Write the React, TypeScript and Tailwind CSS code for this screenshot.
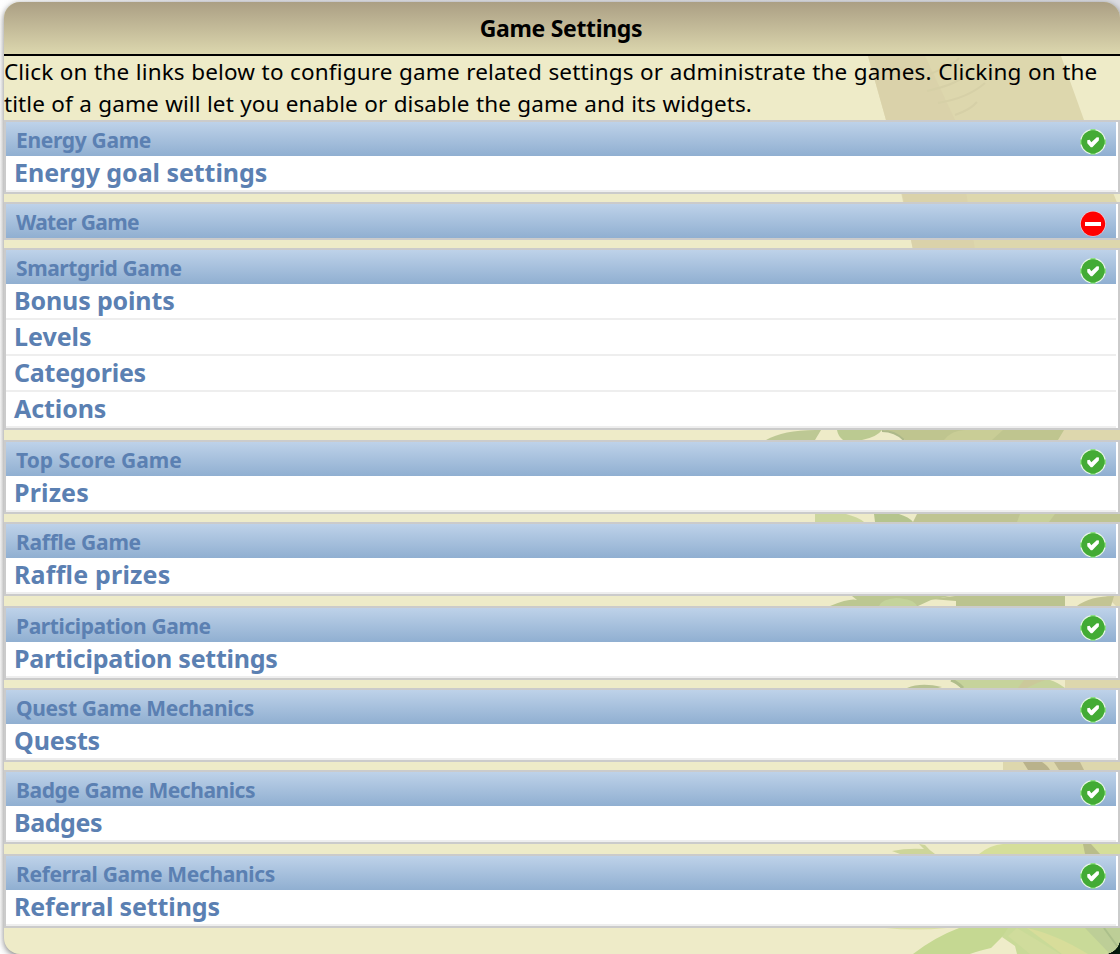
type Link = { label: string; tracking: string };

type Game = {
  title: string;
  tracking: string;
  enabled: boolean;
  links: Link[];
  gap: string;
  icon: string;
};

const games: Game[] = [
  {
    title: "Energy Game",
    tracking: "tracking-[-0.33px]",
    enabled: true,
    links: [{ label: "Energy goal settings", tracking: "tracking-[-0.05px]" }],
    gap: "",
    icon: "mt-[7px]",
  },
  { title: "Water Game", tracking: "tracking-[-0.7px]", enabled: false, links: [], gap: "mt-2", icon: "mt-[7px]" },
  {
    title: "Smartgrid Game",
    tracking: "tracking-[-0.43px]",
    enabled: true,
    links: [
      { label: "Bonus points", tracking: "tracking-[-0.15px]" },
      { label: "Levels", tracking: "tracking-[0px]" },
      { label: "Categories", tracking: "tracking-[-0.25px]" },
      { label: "Actions", tracking: "tracking-[-0.1px]" },
    ],
    gap: "mt-2",
    icon: "mt-2",
  },
  {
    title: "Top Score Game",
    tracking: "tracking-[0px]",
    enabled: true,
    links: [{ label: "Prizes", tracking: "tracking-[0.15px]" }],
    gap: "mt-2.5",
    icon: "mt-[7px]",
  },
  {
    title: "Raffle Game",
    tracking: "tracking-[-0.25px]",
    enabled: true,
    links: [{ label: "Raffle prizes", tracking: "tracking-[0.2px]" }],
    gap: "mt-2",
    icon: "mt-2",
  },
  {
    title: "Participation Game",
    tracking: "tracking-[-0.4px]",
    enabled: true,
    links: [{ label: "Participation settings", tracking: "tracking-[-0.25px]" }],
    gap: "mt-2.5",
    icon: "mt-[7px]",
  },
  {
    title: "Quest Game Mechanics",
    tracking: "tracking-[-0.35px]",
    enabled: true,
    links: [{ label: "Quests", tracking: "tracking-[-0.15px]" }],
    gap: "mt-2",
    icon: "mt-[7px]",
  },
  {
    title: "Badge Game Mechanics",
    tracking: "tracking-[-0.45px]",
    enabled: true,
    links: [{ label: "Badges", tracking: "tracking-[-0.45px]" }],
    gap: "mt-2",
    icon: "mt-2",
  },
  {
    title: "Referral Game Mechanics",
    tracking: "tracking-[-0.33px]",
    enabled: true,
    links: [{ label: "Referral settings", tracking: "tracking-[-0.12px]" }],
    gap: "mt-2.5",
    icon: "mt-[7px]",
  },
];

function StatusIcon({ enabled, className }: { enabled: boolean; className: string }) {
  return (
    <svg viewBox="0 0 26 26" className={`mr-2.5 h-[26px] w-[26px] shrink-0 ${className}`}>
      {enabled ? (
        <>
          <circle cx="13" cy="12.8" r="12.8" fill="#e9f8e6" />
          <path d="M10.5 1 H15.5 M10.5 24.6 H15.5 M1.1 10.5 V15.5 M24.9 10.5 V15.5" stroke="#6fd864" strokeWidth="1.6" />
          <circle cx="13" cy="12.8" r="11.6" fill="#43ab35" />
          <path d="M7.2 11.2 L9.6 10.8 L11.3 13.2 L16.8 8.2 L19 8.4 L18.8 11.6 L12.3 18.2 L10.8 18.2 L7.3 14.3 Z" fill="#fff" />
        </>
      ) : (
        <>
          <circle cx="13" cy="12.8" r="12.8" fill="#f4d3dc" />
          <circle cx="13" cy="12.8" r="12.2" fill="#f00" />
          <rect x="5" y="11" width="16" height="4" fill="#fff" />
        </>
      )}
    </svg>
  );
}

function PlantBackdrop() {
  return (
    <svg viewBox="0 0 1116 952" className="absolute inset-0 h-full w-full" preserveAspectRatio="none">
      <g transform="translate(-4 -2)">
        <path d="M864 0 L868 56 L886 120 L903 198 L913 250 L940 430 L1120 610 V210 L1084 120 L1061 56 L1047 0 Z" fill="#ddd7ad" />
        <path d="M868 56 L886 120 L913 250 L975 250 L955 120 L925 56 Z" fill="#d8d0a8" opacity=".7" />
        <path d="M930 74 q25 -10 29 -16 M927 91 q32 -7 42 -19 M938 103 q30 -5 47 -20 M955 115 q15 -5 22 -13" stroke="#d6d0a7" fill="none" strokeWidth="2" />
        <path d="M940 428 H1120 V606 H1065 V762 H1003 V772 H1120 V940 V428 Z" fill="#ddd7ad" />

        <path d="M766 440 Q785 429 821 430 L815 440 Z" fill="#bdc894" />
        <path d="M837 430 H882 Q877 437 862 440 H843 Q838 436 837 430 Z" fill="#bbca91" />
        <path d="M883 430 H1064 L1058 440 H905 Q895 433 883 430 Z" fill="#bfc58f" />
        <path d="M944 440 Q952 430 965 430 H1003 L992 440 Z" fill="#c9cd96" />
        <path d="M882 431 Q895 431 904 440" stroke="#aeb98a" fill="none" strokeWidth="2" />

        <path d="M815 514 H846 Q858 517 864 522 H815 Z" fill="#ccd69e" />
        <path d="M874 514 H899 Q909 517 913 522 H875 Z" fill="#b5c48d" />
        <path d="M917 514 H1120 V522 H913 Z" fill="#bfc492" />
        <path d="M1020 514 H1055 L1049 522 H1017 Z" fill="#c8d09a" />

        <path d="M830 606 Q850 598 857 600 L852 596 H950 L931 600 L918 606 Z" fill="#bcc791" />
        <path d="M879 606 Q882 599 896 598 Q914 599 917 606 Z" fill="#c4d39b" />
        <path d="M955 596 H1065 V606 H956 V601 L931 599 Z" fill="#bbc38f" />
        <path d="M1077 606 Q1090 596 1114 596 L1111 606 Z" fill="#c3c493" />

        <path d="M907 688 Q921 682 942 687 L938 688 Z" fill="#b8c292" />
        <path d="M951 680 L961 688 H1065 Q1057 682 1050 680 Z" fill="#c6d39b" />
        <path d="M951 680 Q957 682 963 688" stroke="#b0bd8b" fill="none" strokeWidth="3" />
        <path d="M1024 680 H1045 L1037 683 L1027 688 H1018 Z" fill="#cbc99a" />

        <path d="M1023 762 H1042 Q1048 766 1050 770 H1028 Z" fill="#b9b28b" />
        <path d="M1054 762 H1080 L1084 770 H1059 Z" fill="#bfb891" />

        <path d="M892 851 Q907 848 924 849 L919 844 L925 845 Q930 851 935 854 H900 Z" fill="#cdd59a" />
        <path d="M979 854 Q990 845 1003 844 H1120 V854 Z" fill="#d5de9a" />
        <path d="M1083 844 H1091 L1100 854 H1085 Z" fill="#b9bd8a" />

        <path d="M928 954 H1120 V926 H960 Z" fill="#efecc9" />
        <path d="M885 928 H947 Q915 931 885 928 Z" fill="#dbe0a5" />
        <path d="M913 954 Q935 937 959 928 H1015 L1002 937 L991 948 Q978 951 970 954 Z" fill="#c5d892" />
        <path d="M1017 954 L1015 946 L1002 937 L1008 928 H1120 V954 Z" fill="#c9da98" />
        <path d="M1017 928 L1060 954 H1030 L1008 936 Z" fill="#d0dc9c" />
        <path d="M1027 928 Q1055 934 1088 954 H1062 Z" fill="#d8dd9a" />
        <path d="M1085 928 L1110 954 H1120 V928 Z" fill="#bdce97" />
        <path d="M1104 928 L1120 950" stroke="#abbf8b" fill="none" strokeWidth="2" />
      </g>
    </svg>
  );
}

function GamePanel({ game }: { game: Game }) {
  return (
    <section className={`border-2 border-[#cbcbcb] bg-white pr-0.5 ${game.gap}`}>
      <header className="flex h-[34px] items-start justify-between bg-linear-to-b from-[#bed2e9] to-[#90afd1] pl-2.5 text-[#5b80b2]">
        <h2 className={`text-[21px] leading-[37px] font-bold whitespace-nowrap ${game.tracking}`}>{game.title}</h2>
        <StatusIcon enabled={game.enabled} className={game.icon} />
      </header>
      {game.links.map((link) => (
        <a
          key={link.label}
          className={`flex h-9 border-b-2 border-[#eeeeee] pl-2 text-[25px] leading-[33px] font-bold whitespace-nowrap text-[#5b80b2] ${link.tracking}`}
        >
          {link.label}
        </a>
      ))}
    </section>
  );
}

export default function App() {
  return (
    <div className="flex h-[954px] w-[1120px] flex-col overflow-hidden bg-[radial-gradient(circle_at_100%_100%,#06200f_0,#06200f_24px,transparent_25px),linear-gradient(to_right,#ffffff_0%,#e3e3e9_20%,#dcdde2_100%)] pt-0.5 pl-1 font-['Noto_Sans',sans-serif]">
      <main className="relative h-[952px] shrink-0 overflow-hidden rounded-2xl bg-[#eeebc8] shadow-[0_2px_6px_rgba(0,0,0,0.5)]">
        <PlantBackdrop />
        <div className="relative">
          <h1 className="h-[54px] border-b-2 border-black bg-linear-to-b from-[#ab9f84] to-[#dcd7ae] pr-0.5 text-center text-[23px] leading-[53px] font-bold tracking-[-0.33px]">
            Game Settings
          </h1>
          <p className="h-16 text-[22.5px] leading-8 tracking-[0.15px] whitespace-nowrap text-black [word-spacing:0.45px]">
            Click on the links below to configure game related settings or administrate the games. Clicking on the
            <br />
            <span className="tracking-[0.08px]">title of a game will let you enable or disable the game and its widgets.</span>
          </p>
          {games.map((game) => (
            <GamePanel key={game.title} game={game} />
          ))}
        </div>
      </main>
    </div>
  );
}
